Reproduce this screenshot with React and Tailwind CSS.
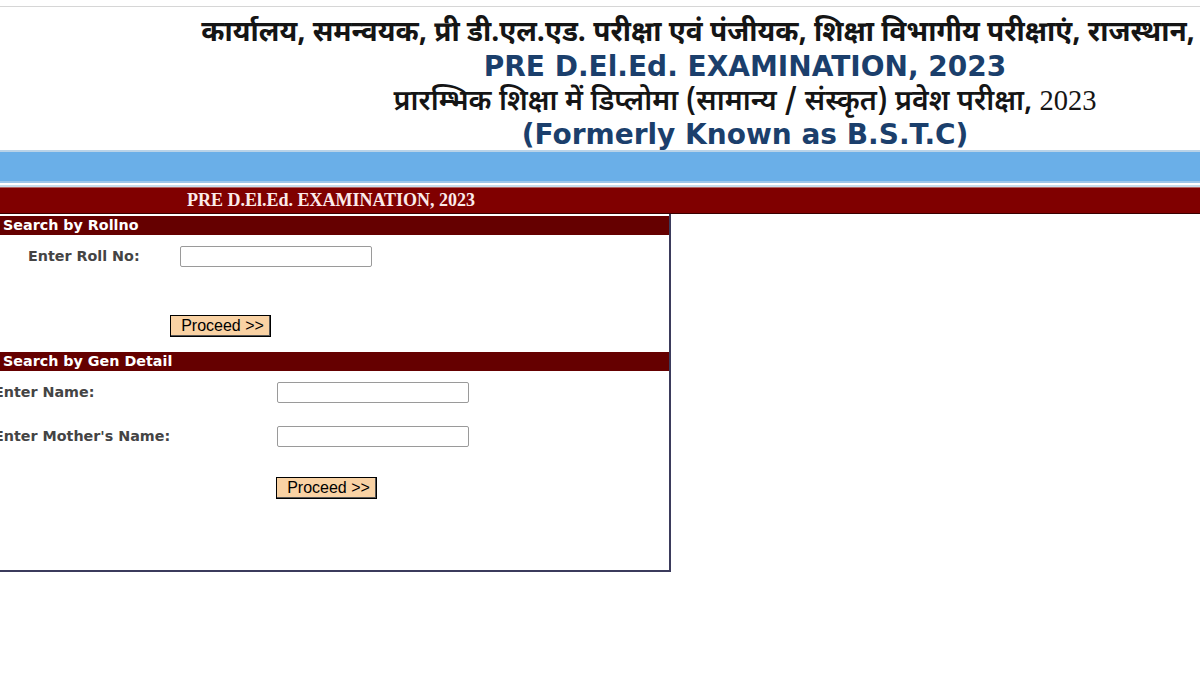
import React from "react";

const deva = { fontFamily: '"Noto Sans Devanagari", "Noto Sans", "Lohit Devanagari", sans-serif' };

function Btn() {
  return (
    <button
      type="button"
      className="flex h-[22px] w-[101px] items-center justify-center border border-black bg-[#f9d2a4] pl-[4px] text-[16px] leading-none text-black shadow-[inset_-1px_-1px_0_#555]"
      style={{ fontFamily: '"Liberation Sans", Arial, sans-serif' }}
    >
      Proceed &gt;&gt;
    </button>
  );
}

function Input() {
  return <input className="h-[21px] w-[192px] rounded-[2px] border border-[#9a9a9a] bg-white" />;
}

function SectionHead({ children }) {
  return (
    <div className="flex h-[19px] items-center bg-[#650000] pl-[3px] text-[14.3px] font-bold leading-none text-white">
      {children}
    </div>
  );
}

function Label({ className = "", children }) {
  return <div className={`text-[14.3px] font-bold leading-[21px] text-[#444] ${className}`}>{children}</div>;
}

export default function App() {
  return (
    <div
      className="relative h-[675px] w-[1200px] overflow-hidden bg-white"
      style={{ fontFamily: '"DejaVu Sans", Verdana, sans-serif' }}
    >
      <div className="h-[6px]" />
      <div className="h-px bg-[#d6d6d6]" />
      {/* header */}
      <div className="w-[1490px] pt-[10px] text-center">
        <div className="h-[35px] whitespace-nowrap text-[28px] font-bold leading-[35px] text-[#151515]" style={deva}>
          कार्यालय, समन्वयक, प्री डी.एल.एड. परीक्षा एवं पंजीयक, शिक्षा विभागीय परीक्षाएं, राजस्थान, बीकानेर
        </div>
        <div className="h-[29px] text-[28px] font-bold leading-[29px] text-[#1b3f6c]">PRE D.El.Ed. EXAMINATION, 2023</div>
        <div className="h-[39px] whitespace-nowrap text-[28.5px] font-semibold leading-[39px] text-[#151515]" style={deva}>
          प्रारम्भिक शिक्षा में डिप्लोमा (सामान्य / संस्कृत) प्रवेश परीक्षा,{" "}
          <span className="font-normal" style={{ fontFamily: '"Liberation Serif", serif' }}>2023</span>
        </div>
        <div className="h-[30px] text-[28px] font-bold leading-[30px] text-[#1b3f6c]">(Formerly Known as B.S.T.C)</div>
      </div>
      {/* blue bar */}
      <div className="h-[2px] bg-[#b9d3e8]" />
      <div className="h-[29px] bg-[#6aafe8]" />
      <div className="h-[2px] bg-[#9cc6ea]" />
      <div className="h-[2px] bg-white" />
      <div className="h-[2px] bg-[#c8dceb]" />
      {/* maroon bar */}
      <div className="h-px bg-[#b06060]" />
      <div className="flex h-[25px] items-center bg-[#800000]">
        <div
          className="w-[662px] text-center text-[18px] font-bold text-[#fbeaea]"
          style={{ fontFamily: '"Liberation Serif", "Times New Roman", serif' }}
        >
          PRE D.El.Ed. EXAMINATION, 2023
        </div>
      </div>
      <div className="h-px bg-[#3a0000]" />
      {/* panel */}
      <div className="w-[671px] border-b-[2px] border-r-[2px] border-[#3b3b5c] bg-white">
        <div className="h-[2px]" />
        <SectionHead>Search by Rollno</SectionHead>
        <div className="flex items-center pt-[11px]">
          <Label className="w-[180px] pl-[28px]">Enter Roll No:</Label>
          <Input />
        </div>
        <div className="pl-[170px] pt-[48px]">
          <Btn />
        </div>
        <div className="h-[15px]" />
        <SectionHead>Search by Gen Detail</SectionHead>
        <div className="flex items-center pt-[11px]">
          <Label className="ml-[-6px] w-[283px]">Enter Name:</Label>
          <Input />
        </div>
        <div className="flex items-center pt-[23px]">
          <Label className="ml-[-6px] w-[283px]">Enter Mother's Name:</Label>
          <Input />
        </div>
        <div className="pl-[276px] pt-[30px]">
          <Btn />
        </div>
        <div className="h-[71px]" />
      </div>
    </div>
  );
}
